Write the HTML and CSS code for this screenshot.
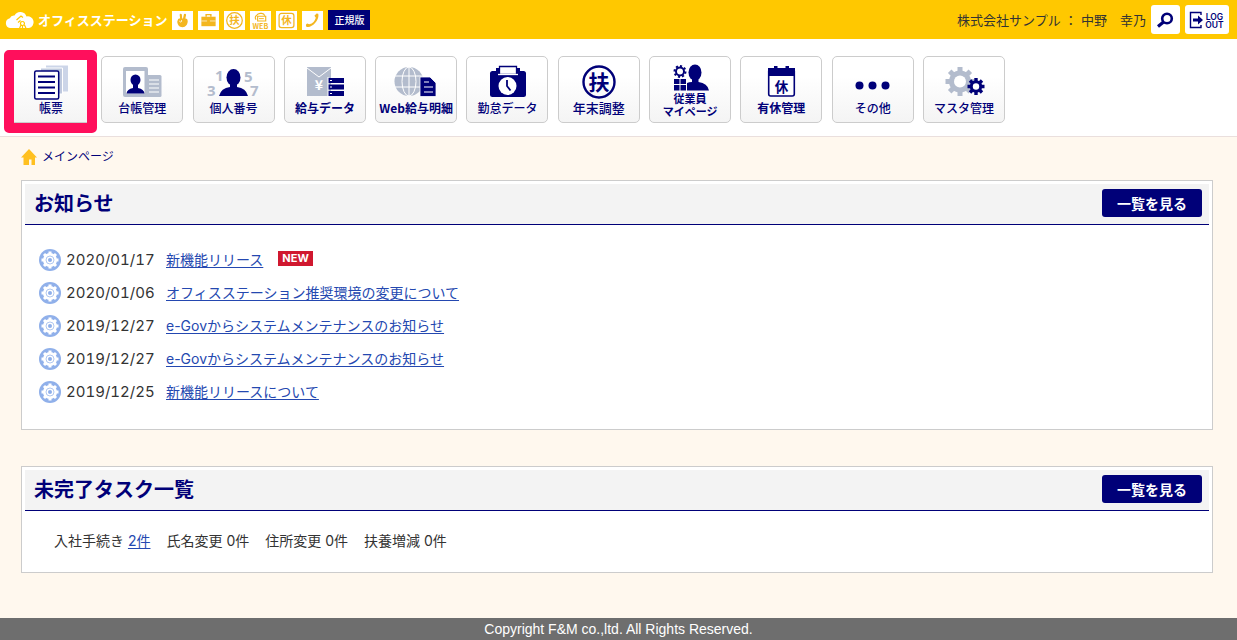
FILE: index.html
```html
<!DOCTYPE html>
<html lang="ja">
<head>
<meta charset="utf-8">
<meta name="viewport" content="width=device-width, initial-scale=1">
<title>オフィスステーション</title>
<link rel="stylesheet" href="styles.css">
</head>
<body>
<svg class="defs" aria-hidden="true">
  <symbol id="notice" viewBox="0 0 22 22">
    <circle cx="11" cy="11" r="11" fill="#90b0ea"/>
    <circle cx="11" cy="11" r="7" fill="#fff"/>
    <path d="M11 2.500v17M2.500 11h17M5 5l12 12M17 5L5 17" stroke="#fff" stroke-width="3"/>
    <circle cx="11" cy="11" r="4" fill="none" stroke="#90b0ea" stroke-width=".7"/>
    <circle cx="11" cy="11" r="2" fill="#90b0ea"/>
  </symbol>
</svg>

<header class="topbar">
  <a class="brand" href="#">
    <svg width="30" height="20" viewBox="0 0 30 20" aria-hidden="true">
      <path d="M5 18a5 5 0 0 1-.2-9.800A4.500 4.500 0 0 1 9.500 5.500A6.500 6.500 0 0 1 21.500 6.500A5.800 5.800 0 0 1 24 18z" fill="#fff"/>
      <path d="M11.500 10l4.500-4 2 1.500M13 12.500l2.500-2M17.500 11.500a2 2 0 1 1-.1 0M16 15l-2 4.500M19.500 15l2 4.500M17.500 15.500v2.500" fill="none" stroke="#ffc800" stroke-width="1.200"/>
    </svg>
    <span>オフィスステーション</span>
  </a>
  <nav class="services" aria-label="サービス">
    <a href="#" aria-label="労務"><svg viewBox="0 0 21 20"><path d="M6 8.500Q6.500 7.500 8 8L7.500 4a1.200 1.200 0 0 1 2.300-.3L10.200 8h.8L12 3.500a1.200 1.200 0 0 1 2.300.5L13.500 8Q16 8 16 10.500C16 14 14 17 10.500 17S5 14 5 11z" fill="#f3b61f"/><path d="M7 10.500l2 1.500M9.500 9.500v2" stroke="#fff" stroke-width=".8"/></svg></a>
    <a href="#" aria-label="業務"><svg viewBox="0 0 21 20"><path d="M3 6h15v10H3z" fill="#f3b61f"/><path d="M8 6V3.800h5V6" fill="none" stroke="#f3b61f" stroke-width="1.500"/><path d="M3 10.500h15" stroke="#fff" stroke-width=".7"/><path d="M9 9.500h3v2.500H9z" fill="#f3b61f"/></svg></a>
    <a href="#" aria-label="年末調整"><svg viewBox="0 0 21 20"><circle cx="10.500" cy="10" r="8.200" fill="none" stroke="#f3b61f" stroke-width="1.300"/><text x="10.500" y="14" class="glyph" font-size="11" fill="#f3b61f">扶</text></svg></a>
    <a href="#" aria-label="Web給与明細"><svg viewBox="0 0 21 20"><path d="M6 9a2.500 2.500 0 0 1 0-4Q8 2 11 2.500Q14 2 15 5" fill="none" stroke="#f3b61f" stroke-width="1.200"/><path d="M7.500 5.500h8.500v5H7.500z" fill="none" stroke="#f3b61f" stroke-width="1.200"/><path d="M9 8h5" stroke="#f3b61f"/><text x="10.500" y="18.500" class="glyph" font-size="7.500" fill="#f3b61f">WEB</text></svg></a>
    <a href="#" aria-label="有休管理"><svg viewBox="0 0 21 20"><rect x="2.700" y="2.500" width="15.600" height="15" rx="2.500" fill="none" stroke="#f3b61f" stroke-width="1.300"/><text x="10.500" y="14" class="glyph" font-size="11" fill="#f3b61f">休</text></svg></a>
    <a href="#" aria-label="電話"><svg viewBox="0 0 21 20"><path d="M4 16.500c-.8-1.700-.4-2.600 1-3.300l2 .8C11 13 13 10.500 14 7l-1.500-2 2.300-2.400 1.700.4c1 3-1 7.500-3.500 10S7 17.800 4 16.500z" fill="#f3b61f"/></svg></a>
  </nav>
  <span class="edition">正規版</span>
  <p class="user">株式会社サンプル ： 中野　幸乃</p>
  <button class="tool" type="button" aria-label="検索">
    <svg width="19" height="18" viewBox="0 0 19 18"><circle cx="11" cy="7.500" r="4.800" fill="none" stroke="#000078" stroke-width="2.600"/><path d="M7.500 11L2 15.500" stroke="#000078" stroke-width="3.200"/></svg>
  </button>
  <button class="tool tool-wide" type="button" aria-label="ログアウト">
    <svg width="36" height="18" viewBox="0 0 36 18"><path d="M12 4V1.500H1.500v15H12V14" fill="none" stroke="#000078" stroke-width="1.400"/><path d="M4 7.500h5V4.500l5 4.500-5 4.500v-3H4z" fill="#000078"/><text x="25.500" y="8.500" class="glyph log" font-size="8.500">LOG</text><text x="25.500" y="16.500" class="glyph log" font-size="8.500">OUT</text></svg>
  </button>
</header>

<nav class="menu" aria-label="メインメニュー">
  <ul class="menu-list">
    <li class="current"><a href="#">
      <svg viewBox="2 0 56 36"><path d="M25 1.500h22v26H25z" fill="#ccd5e8"/><path d="M19.500 4h22v26h-22z" fill="#bfc9de" stroke="#fff"/><rect x="13.700" y="7" width="24" height="28" rx="1.500" fill="#fff" stroke="#000078" stroke-width="1.500"/><path d="M17 12.500h17M17 18h17M17 23.500h17M17 29h17" stroke="#000078" stroke-width="2"/></svg>
      <span>帳票</span></a></li>
    <li><a href="#">
      <svg viewBox="0 0 50 36"><rect x="6" y="3" width="25" height="30" rx="2" fill="#b3bccd"/><rect x="29" y="11" width="15.500" height="22" rx="1.500" fill="#b3bccd"/><path d="M9 7h18.500v22.500H9z" fill="#fff"/><path d="M32 16h10M32 20h10M32 24h10M32 28h10" stroke="#fff" stroke-width="1.200"/><ellipse cx="18.500" cy="16" rx="5" ry="5.500" fill="#000078"/><path d="M16 20h5v4q6 1 6.500 5.500h-18Q10 25 16 24z" fill="#000078"/></svg>
      <span>台帳管理</span></a></li>
    <li><a href="#">
      <svg viewBox="0 0 60 36"><g class="glyph num" font-size="15"><text x="11" y="17">1</text><text x="3" y="32">3</text><text x="40" y="18">5</text><text x="46" y="32">7</text></g><ellipse cx="29.500" cy="13.500" rx="7" ry="8.500" fill="#000078"/><path d="M26 18h7v5q9 1 11 9h-29q2-8 11-9z" fill="#000078"/></svg>
      <span>個人番号</span></a></li>
    <li><a href="#">
      <svg viewBox="0 0 50 36"><path d="M7 3h24v29H7z" fill="#b3bccd"/><path d="M7 4l12 9 12-9" fill="none" stroke="#fff"/><text x="19" y="26" class="glyph" font-size="14" fill="#fff">¥</text><path d="M28 14h16v5H28zM28 20.500h16v5H28zM28 27h16v5H28z" fill="#000078"/><path d="M28 13v20" stroke="#fff"/><path d="M30 16.500h2M30 23h2M30 29.500h2" stroke="#fff"/></svg>
      <span class="strong">給与データ</span></a></li>
    <li><a href="#">
      <svg viewBox="0 0 50 36"><circle cx="18" cy="17.500" r="14.500" fill="#b3bccd"/><path d="M18 3v29M4 12h28M4 23h28" stroke="#fff"/><ellipse cx="18" cy="17.500" rx="7" ry="14.500" fill="none" stroke="#fff"/><path d="M29 13h10l6 6v13.500H29z" fill="#000078" stroke="#fff" stroke-width=".8"/><path d="M33 18h5M33 23h9M33 28h9" stroke="#fff" stroke-width="1.200"/></svg>
      <span class="strong">Web給与明細</span></a></li>
    <li><a href="#">
      <svg viewBox="0 0 50 36"><rect x="8" y="7" width="36" height="26" rx="2.500" fill="#000078"/><path d="M14 4h24v7H14z" fill="#000078"/><path d="M17.500 2.500h17v8h-17z" fill="#fff" stroke="#000078" stroke-width="1.300"/><path d="M16 10.500h20" stroke="#fff" stroke-width="1.300"/><circle cx="25.500" cy="22" r="9" fill="#fff"/><path d="M25 16v6l3.500 4.500" fill="none" stroke="#000078" stroke-width="1.800"/></svg>
      <span>勤怠データ</span></a></li>
    <li><a href="#">
      <svg viewBox="0 0 50 36"><circle cx="25" cy="18" r="15.500" fill="none" stroke="#000078" stroke-width="2.400"/><text x="25" y="25.500" class="glyph" font-size="21" fill="#000078">扶</text></svg>
      <span class="wide">年末調整</span></a></li>
    <li><a class="two-line" href="#">
      <svg viewBox="0 0 50 28"><g fill="none" stroke="#000078"><circle cx="15" cy="7.500" r="4" stroke-width="2"/><circle cx="15" cy="7.500" r="5.500" stroke-width="2" pathLength="16" stroke-dasharray="1 1"/></g><path d="M9 15h5.500v5H9zM15.500 15H21v5h-5.500zM9 21h5.500v5.500H9zM15.500 21H21v5.500h-5.500z" fill="#000078"/><ellipse cx="30" cy="8.500" rx="6.500" ry="8" fill="#000078"/><path d="M27 13.500h6.500V18q9 1 10.500 8.500H22V19q2-1 5-1z" fill="#000078"/></svg>
      <span class="strong">従業員<br>マイページ</span></a></li>
    <li><a href="#">
      <svg viewBox="0 0 50 36"><rect x="12.700" y="5" width="25.600" height="27" rx="2" fill="#fff" stroke="#000078" stroke-width="1.600"/><path d="M12 4h6V2h3.500v2h8V2H33v2h6v8H12z" fill="#000078"/><text x="25.500" y="27.500" class="glyph" font-size="13.500" fill="#000078">休</text></svg>
      <span class="strong">有休管理</span></a></li>
    <li><a href="#">
      <svg viewBox="0 0 50 36"><g fill="#000078"><circle cx="11.500" cy="21.500" r="4"/><circle cx="24.500" cy="21.500" r="4"/><circle cx="37.500" cy="21.500" r="4"/></g></svg>
      <span>その他</span></a></li>
    <li><a href="#">
      <svg viewBox="0 0 50 36"><circle cx="21" cy="17.500" r="11" fill="#b3bccd"/><path d="M21 3v29M6.500 17.500h29M10.700 7.200l20.600 20.600M31.300 7.200L10.700 27.800" stroke="#b3bccd" stroke-width="5"/><circle cx="21" cy="17.500" r="6" fill="#fff"/><circle cx="37" cy="22.500" r="6.200" fill="#000078"/><path d="M37 14v17M28.500 22.500h17M31 16.500l12 12M43 16.500l-12 12" stroke="#000078" stroke-width="3.400"/><circle cx="37" cy="22.500" r="3.200" fill="#fff"/></svg>
      <span>マスタ管理</span></a></li>
  </ul>
</nav>

<main class="content">
  <a class="crumb" href="#">
    <svg width="16" height="16" viewBox="0 0 16 16" aria-hidden="true"><path d="M8 0l8 8.500h-2V16h-3.500v-5.500H8V16H2.500V8.500H0z" fill="#ffc020"/></svg>
    メインページ
  </a>

  <section class="panel">
    <div class="panel-head"><h2>お知らせ</h2><button class="more" type="button">一覧を見る</button></div>
    <ul class="news">
      <li><svg class="mark"><use href="#notice"/></svg><time>2020/01/17</time><a href="#">新機能リリース</a><strong class="new">NEW</strong></li>
      <li><svg class="mark"><use href="#notice"/></svg><time>2020/01/06</time><a href="#">オフィスステーション推奨環境の変更について</a></li>
      <li><svg class="mark"><use href="#notice"/></svg><time>2019/12/27</time><a href="#">e-Govからシステムメンテナンスのお知らせ</a></li>
      <li><svg class="mark"><use href="#notice"/></svg><time>2019/12/27</time><a href="#">e-Govからシステムメンテナンスのお知らせ</a></li>
      <li><svg class="mark"><use href="#notice"/></svg><time>2019/12/25</time><a href="#">新機能リリースについて</a></li>
    </ul>
  </section>

  <section class="panel">
    <div class="panel-head"><h2>未完了タスク一覧</h2><button class="more" type="button">一覧を見る</button></div>
    <ul class="tasks">
      <li>入社手続き <a href="#">2件</a></li>
      <li>氏名変更 0件</li>
      <li>住所変更 0件</li>
      <li>扶養増減 0件</li>
    </ul>
  </section>
</main>

<footer class="footer">Copyright F&amp;M co.,ltd. All Rights Reserved.</footer>
</body>
</html>
```

FILE: styles.css
```css
* { box-sizing: border-box; }

body {
  margin: 0;
  min-height: 100vh;
  display: flex;
  flex-direction: column;
  background: #fff8ee;
  color: #333;
  font: 14px/20px Inter, "Noto Sans CJK JP", sans-serif;
}

ul, h2, p { margin: 0; padding: 0; }
ul { list-style: none; }
a { color: #2448b0; text-underline-offset: 2px; }
svg { display: block; flex: none; overflow: visible; }
button { border: 0; padding: 0; cursor: pointer; }

.defs { position: absolute; width: 0; height: 0; }

.glyph {
  font-family: "Noto Sans CJK JP", sans-serif;
  font-weight: 700;
  text-anchor: middle;
}
.glyph.log { fill: #000078; font-family: Inter, sans-serif; font-weight: 600; }
.glyph.num { fill: #b3bccd; font-family: "Open Sans", sans-serif; text-anchor: start; }

/* Top bar */
.topbar {
  display: flex;
  align-items: center;
  height: 39px;
  padding: 0 8px 0 5px;
  background: #ffc800;
}
.brand {
  display: flex;
  align-items: center;
  gap: 3px;
  color: #fff;
  font-size: 13px;
  font-weight: 700;
  text-decoration: none;
}
.services { display: flex; gap: 5px; margin: 2px 5px 0 5px; }
.services a { width: 21px; height: 19px; background: #fff; }
.services svg { width: 21px; height: 19px; }
.edition {
  padding: 0 6px;
  background: #000078;
  color: #fff;
  font-size: 10px;
  font-weight: 500;
}
.user { margin: 1px 5px 0 auto; font-size: 13px; }
.tool {
  display: grid;
  place-items: center;
  width: 29px;
  height: 29px;
  border-radius: 3px;
  background: #fff;
}
.tool-wide { width: 44px; margin-left: 5px; }

/* Main menu */
.menu {
  padding: 17px 10px 13px;
  background: #fff;
  border-bottom: 1px solid #eadfdd;
}
.menu-list {
  display: flex;
  justify-content: space-between;
  max-width: 995px;
}
.menu-list li { position: relative; }
.menu-list a {
  display: flex;
  flex-direction: column;
  align-items: center;
  gap: 1px;
  width: 82px;
  height: 67px;
  padding-top: 7px;
  border: 1px solid #ccc;
  border-radius: 5px;
  background: linear-gradient(#fff 30%, #f4f4f4);
  color: #000078;
  font: 500 12px/14px "Noto Sans CJK JP", sans-serif;
  text-align: center;
  text-decoration: none;
  white-space: nowrap;
}
.menu-list svg { height: 36px; }
.menu-list .two-line { gap: 0; font-size: 11px; line-height: 13px; }
.menu-list .two-line svg { height: 28px; }
.menu-list .strong { font-weight: 700; }
.menu-list .wide { font-size: 13px; }
.current::after {
  content: "";
  position: absolute;
  inset: -6px -5px -10px -6px;
  border: 10px solid #ff0f5c;
  border-radius: 5px;
  pointer-events: none;
}

/* Content */
.content { flex: 1; padding: 10px 24px 0 21px; }
.crumb {
  display: flex;
  align-items: center;
  gap: 5px;
  width: max-content;
  color: #000078;
  font-size: 12px;
  text-decoration: none;
}
.panel {
  margin-bottom: 36px;
  padding: 3px;
  border: 1px solid #ccc;
  background: #fff;
}
.crumb + .panel { margin-top: 13px; }
.panel-head {
  display: flex;
  align-items: center;
  justify-content: space-between;
  height: 41px;
  padding: 0 7px 0 9px;
  border-bottom: 1px solid #000078;
  background: #f3f3f3;
}
.panel h2 { color: #000078; font-size: 20px; line-height: 28px; }
.more {
  width: 100px;
  height: 28px;
  margin-bottom: 2px;
  border-radius: 3px;
  background: #000078;
  color: #fff;
  font: 700 14px/26px "Noto Sans CJK JP", sans-serif;
}
.news { padding: 18px 14px 18px; }
.news li { display: flex; align-items: center; height: 33px; }
.mark { width: 22px; height: 22px; margin-right: 5px; }
.news time { width: 100px; font-size: 15px; font-variant-numeric: tabular-nums; }
.new {
  align-self: flex-start;
  margin: 8px 0 0 15px;
  padding: 0 4px;
  background: #d0182f;
  color: #fff;
  font-size: 11px;
  line-height: 15px;
}
.tasks { display: flex; flex-wrap: wrap; gap: 16px; padding: 20px 29px 18px; }

.footer {
  height: 22px;
  background: #6e6e6e;
  color: #fff;
  font: 14px/22px "Liberation Sans", Arial, sans-serif;
  text-align: center;
}
```
